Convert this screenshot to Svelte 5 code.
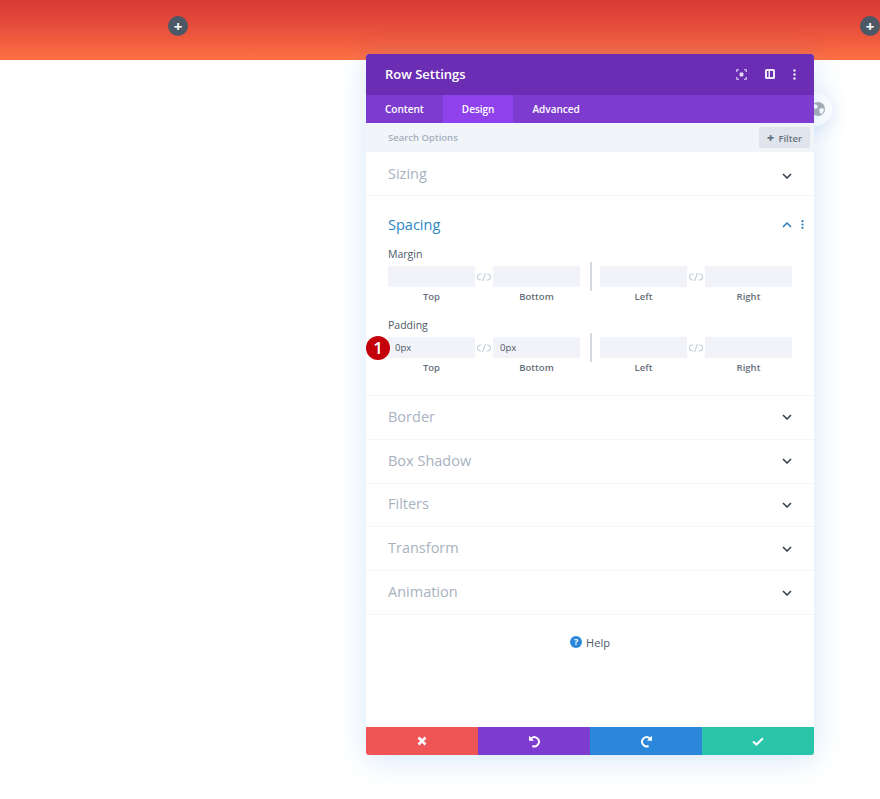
<script>
  const groups = [
    { label: 'Margin', values: ['', '', '', ''] },
    { label: 'Padding', values: ['0px', '0px', '', ''] }
  ];
  const closedBelow = ['Border', 'Box Shadow', 'Filters', 'Transform', 'Animation'];
</script>

{#snippet chevron(up = false)}
  <svg class="chev" class:up width="10" height="6" viewBox="0 0 10 6"><path d="M1 1l4 4 4-4" fill="none" stroke="currentColor" stroke-width="1.5" /></svg>
{/snippet}

{#snippet linkIcon()}
  <svg class="link" width="14" height="10" viewBox="0 0 14 10" fill="none" stroke="#c5ccd6" stroke-width="1.1">
    <path d="M4.6 2H3.4a3 3 0 0 0 0 6h.8" />
    <path d="M9.4 8h1.2a3 3 0 0 0 0-6h-.8" />
    <path d="M5.6 9l2.8-8" />
  </svg>
{/snippet}

{#snippet pair(values, names)}
  <div class="pair">
    <div class="cell">
      <div class="input">{values[0]}</div>
      <span class="cap">{names[0]}</span>
    </div>
    {@render linkIcon()}
    <div class="cell">
      <div class="input">{values[1]}</div>
      <span class="cap">{names[1]}</span>
    </div>
  </div>
{/snippet}

<div class="page">
  <div class="band">
    <button class="add">+</button>
    <button class="add">+</button>
  </div>

  <div class="globe">
    <svg width="14" height="14" viewBox="0 0 14 14">
      <circle cx="7" cy="7" r="7" fill="#a9adb3" />
      <path d="M3 2l3 1 1 2-2 2-3-1zM8 7l4-1 1 2-2 4-2-1z" fill="#fff" />
    </svg>
  </div>

  <div class="modal">
    <header>
      <h1>Row Settings</h1>
      <div class="tools">
        <svg width="11" height="11" viewBox="0 0 11 11" fill="none" stroke="#e6dcf5" stroke-width="1.1">
          <path d="M3 .8H.8V3M8 .8h2.2V3M3 10.2H.8V8M8 10.2h2.2V8" />
          <rect x="3.6" y="3.6" width="3.8" height="3.8" rx="1" fill="#e6dcf5" stroke="none" />
        </svg>
        <svg width="10" height="10" viewBox="0 0 10 10">
          <rect width="10" height="10" rx="1.5" fill="#f0e9fa" />
          <path d="M2 2h1.5v6H2zM5 2h3v6H5z" fill="#6a2db3" />
        </svg>
        <svg width="3" height="11" viewBox="0 0 3 11" fill="#f0e9fa">
          <circle cx="1.5" cy="1.5" r="1.2" /><circle cx="1.5" cy="5.5" r="1.2" /><circle cx="1.5" cy="9.5" r="1.2" />
        </svg>
      </div>
    </header>

    <nav>
      <span class="tab">Content</span>
      <span class="tab active">Design</span>
      <span class="tab">Advanced</span>
    </nav>

    <div class="search">
      <span>Search Options</span>
      <button class="filter"><b>+</b> Filter</button>
    </div>

    <section class="row first">
      <h2>Sizing</h2>
      {@render chevron()}
    </section>

    <section class="spacing">
      <div class="spacing-head">
        <h2>Spacing</h2>
        <div class="head-tools">
          {@render chevron(true)}
          <svg width="3" height="9" viewBox="0 0 3 9" fill="#2b7cb8">
            <circle cx="1.5" cy="1.2" r="1.1" /><circle cx="1.5" cy="4.5" r="1.1" /><circle cx="1.5" cy="7.8" r="1.1" />
          </svg>
        </div>
      </div>
      {#each groups as group, i}
        <div class="group">
          <div class="label">{group.label}</div>
          <div class="fields">
            {@render pair(group.values.slice(0, 2), ['Top', 'Bottom'])}
            <span class="divider"></span>
            {@render pair(group.values.slice(2), ['Left', 'Right'])}
          </div>
          {#if i === 1}<span class="badge">1</span>{/if}
        </div>
      {/each}
    </section>

    {#each closedBelow as title}
      <section class="row">
        <h2>{title}</h2>
        {@render chevron()}
      </section>
    {/each}

    <div class="help">
      <span class="q">?</span>
      <span>Help</span>
    </div>

    <footer>
      <button class="red" aria-label="Cancel">
        <svg width="10" height="10" viewBox="0 0 10 10"><path d="M1.5 1.5l7 7M8.5 1.5l-7 7" stroke="#fff" stroke-width="2.6" /></svg>
      </button>
      <button class="purple" aria-label="Undo">
        <svg width="13" height="13" viewBox="0 0 13 13" fill="none">
          <path d="M3.2 3.4A4.6 4.6 0 1 1 4.4 11" stroke="#fff" stroke-width="2" />
          <path d="M1 .8v5h5z" fill="#fff" />
        </svg>
      </button>
      <button class="blue" aria-label="Redo">
        <svg width="13" height="13" viewBox="0 0 13 13" fill="none">
          <path d="M9.8 3.4A4.6 4.6 0 1 0 8.6 11" stroke="#fff" stroke-width="2" />
          <path d="M12 .8v5H7z" fill="#fff" />
        </svg>
      </button>
      <button class="green" aria-label="Save">
        <svg width="12" height="9" viewBox="0 0 12 9" fill="none"><path d="M1 4.5l3.4 3L11 1.2" stroke="#fff" stroke-width="2.2" /></svg>
      </button>
    </footer>
  </div>
</div>

<style>
  :global(body) {
    margin: 0;
    background: #fff;
    font-family: "Open Sans", "Liberation Sans", sans-serif;
  }

  .page {
    position: relative;
    width: 880px;
    height: 799px;
    overflow: hidden;
  }

  .band {
    display: flex;
    justify-content: space-between;
    align-items: flex-start;
    box-sizing: border-box;
    height: 60px;
    padding: 16px 0 0 168px;
    background: linear-gradient(180deg, #d93a36 0%, #e2483a 35%, #ff7043 100%);
  }

  .add {
    width: 20px;
    height: 20px;
    padding: 0;
    border: 0;
    border-radius: 50%;
    background: #4c5866;
    color: #fff;
    font: 700 15px/20px "Open Sans", sans-serif;
  }

  .globe {
    position: absolute;
    left: 798px;
    top: 92px;
    width: 34px;
    height: 34px;
    display: flex;
    align-items: center;
    justify-content: flex-end;
    box-sizing: border-box;
    padding-right: 7px;
    border-radius: 50%;
    background: #fff;
    box-shadow: 0 4px 18px rgba(70, 120, 200, 0.18);
  }

  .modal {
    position: absolute;
    left: 366px;
    top: 54px;
    width: 448px;
    height: 701px;
    display: flex;
    flex-direction: column;
    border-radius: 3px;
    background: #fff;
    box-shadow: 0 5px 30px rgba(43, 135, 218, 0.2);
    overflow: hidden;
  }

  header {
    display: flex;
    align-items: center;
    justify-content: space-between;
    box-sizing: border-box;
    height: 41px;
    padding: 0 18px 1px 19px;
    background: #6a2db3;
    flex: none;
  }

  h1 {
    margin: 0;
    color: #fff;
    font-size: 13px;
    font-weight: 600;
  }

  .tools {
    display: flex;
    align-items: center;
    gap: 18px;
  }

  nav {
    display: flex;
    height: 28px;
    background: #7e3bd0;
    flex: none;
  }

  .tab {
    padding: 0 19px;
    color: #fff;
    font-size: 10px;
    font-weight: 600;
    line-height: 28px;
  }

  .tab.active {
    background: #8f42ec;
  }

  .search {
    display: flex;
    align-items: center;
    justify-content: space-between;
    height: 29px;
    padding: 0 4px 0 22px;
    background: #f1f5f9;
    color: #a5afbd;
    font-size: 9.5px;
    font-weight: 600;
    flex: none;
  }

  .filter {
    height: 21px;
    width: 51px;
    padding: 0;
    border: 0;
    border-radius: 2px;
    background: #e0e5ed;
    color: #68727f;
    font: 600 9.5px "Open Sans", sans-serif;
  }

  .filter b {
    font-size: 12px;
    margin-right: 2px;
  }

  .row {
    display: flex;
    align-items: center;
    justify-content: space-between;
    box-sizing: border-box;
    height: 43.8px;
    padding: 0 22px;
    border-bottom: 1px solid #f3f5f8;
    flex: none;
  }

  .row h2 {
    margin-bottom: 2px;
  }

  .row.first {
    height: 44px;
  }

  .row.first h2 {
    margin-bottom: 0;
  }

  .row.first .chev {
    margin-top: 4px;
  }

  h2 {
    margin: 0;
    color: #a8b2bf;
    font-size: 14.5px;
    font-weight: 400;
  }

  .chev {
    color: #323c48;
  }

  .chev.up {
    transform: rotate(180deg);
    color: #2b7cb8;
  }

  .spacing {
    box-sizing: border-box;
    height: 200px;
    padding: 0 22px;
    border-bottom: 1px solid #f3f5f8;
    flex: none;
  }

  .spacing-head {
    display: flex;
    align-items: center;
    justify-content: space-between;
    box-sizing: border-box;
    height: 51px;
    padding-top: 6px;
  }

  .spacing-head h2 {
    color: #2b87c4;
  }

  .head-tools {
    display: flex;
    align-items: center;
    gap: 9.5px;
    margin-right: -12px;
  }

  .group {
    position: relative;
    height: 71px;
  }

  .label {
    color: #4c5866;
    font-size: 10.5px;
    font-weight: 500;
    line-height: 14px;
  }

  .fields {
    display: flex;
    align-items: flex-start;
    margin-top: 5px;
  }

  .pair {
    display: flex;
    align-items: flex-start;
    width: 192px;
  }

  .cell {
    flex: 1;
    text-align: center;
  }

  .input {
    box-sizing: border-box;
    height: 21px;
    padding-left: 7px;
    background: #f1f3f8;
    color: #4c5866;
    font-size: 9.5px;
    font-weight: 500;
    line-height: 21px;
    text-align: left;
  }

  .cap {
    display: block;
    margin-top: 3px;
    color: #666f7b;
    font-size: 9.5px;
    font-weight: 600;
    line-height: 13px;
  }

  .link {
    flex: none;
    margin: 6px 2px 0 2px;
  }

  .divider {
    width: 2px;
    height: 29px;
    margin: -4px 8px 0 10px;
    background: #d3d8de;
  }

  .badge {
    position: absolute;
    left: -22px;
    top: 18px;
    width: 24px;
    height: 24px;
    border-radius: 50%;
    background: #c4000b;
    color: #fff;
    font-size: 17px;
    font-weight: 600;
    line-height: 24px;
    text-align: center;
  }

  .help {
    display: flex;
    align-items: center;
    justify-content: center;
    gap: 4px;
    margin-top: 20px;
    color: #4c5866;
    font-size: 11px;
    font-weight: 500;
  }

  .q {
    width: 12px;
    height: 12px;
    border-radius: 50%;
    background: #2b87da;
    color: #fff;
    font-size: 9px;
    font-weight: 700;
    line-height: 12px;
    text-align: center;
  }

  footer {
    display: grid;
    grid-template-columns: repeat(4, 1fr);
    height: 28px;
    margin-top: auto;
    flex: none;
  }

  footer button {
    display: flex;
    align-items: center;
    justify-content: center;
    padding: 0;
    border: 0;
  }

  .red { background: #ef5555; }
  .purple { background: #7e3bd0; }
  .blue { background: #2b87da; }
  .green { background: #29c4a9; }
</style>
